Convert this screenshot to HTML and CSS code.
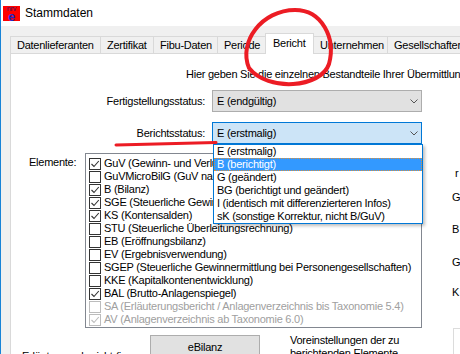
FILE: index.html
```html
<!DOCTYPE html>
<html>
<head>
  <title>Stammdaten</title>
  <meta charset="utf-8">
  <link rel="stylesheet" href="styles.css">
</head>
<body>
  <div class="window">
    <div class="titlebar">
      <span class="app-icon"><span class="nrv">nrv</span><span class="e">e</span></span>
      <span class="title">Stammdaten</span>
    </div>

    <div class="tabs">
      <div class="tab w-daten">Datenlieferanten</div>
      <div class="tab w-zert">Zertifikat</div>
      <div class="tab w-fibu">Fibu-Daten</div>
      <div class="tab w-periode">Periode</div>
      <div class="tab active w-bericht">Bericht</div>
      <div class="tab w-unter">Unternehmen</div>
      <div class="tab w-gesell">Gesellschafter</div>
    </div>

    <div class="panel">
      <p class="intro">Hier geben Sie die einzelnen Bestandteile Ihrer Übermittlung an.</p>

      <div class="field">
        <label class="field-label">Fertigstellungsstatus:</label>
        <div class="combo">
          <span>E (endgültig)</span>
          <svg class="chevron" width="8" height="5" viewBox="0 0 8 5"><polyline points="0.5,0.5 4,4 7.5,0.5" fill="none" stroke="#555" stroke-width="1"/></svg>
        </div>
      </div>

      <div class="field second">
        <label class="field-label">Berichtsstatus:</label>
        <div class="combo focus">
          <span>E (erstmalig)</span>
          <svg class="chevron" width="8" height="5" viewBox="0 0 8 5"><polyline points="0.5,0.5 4,4 7.5,0.5" fill="none" stroke="#555" stroke-width="1"/></svg>
          <ul class="dropdown">
            <li>E (erstmalig)</li>
            <li class="selected">B (berichtigt)</li>
            <li>G (geändert)</li>
            <li>BG (berichtigt und geändert)</li>
            <li>I (identisch mit differenzierteren Infos)</li>
            <li>sK (sonstige Korrektur, nicht B/GuV)</li>
          </ul>
        </div>
      </div>

      <div class="elements">
        <label class="el-label">Elemente:</label>
        <div class="checklist">
          <div class="item"><span class="box checked"></span>GuV (Gewinn- und Verlustrechnung)</div>
          <div class="item"><span class="box"></span>GuVMicroBilG (GuV nach MicroBilG)</div>
          <div class="item"><span class="box checked"></span>B (Bilanz)</div>
          <div class="item"><span class="box checked"></span>SGE (Steuerliche Gewinnermittlung)</div>
          <div class="item"><span class="box checked"></span>KS (Kontensalden)</div>
          <div class="item"><span class="box"></span>STU (Steuerliche Überleitungsrechnung)</div>
          <div class="item"><span class="box"></span>EB (Eröffnungsbilanz)</div>
          <div class="item"><span class="box"></span>EV (Ergebnisverwendung)</div>
          <div class="item"><span class="box"></span>SGEP (Steuerliche Gewinnermittlung bei Personengesellschaften)</div>
          <div class="item"><span class="box"></span>KKE (Kapitalkontenentwicklung)</div>
          <div class="item"><span class="box checked"></span>BAL (Brutto-Anlagenspiegel)</div>
          <div class="item disabled"><span class="box"></span>SA (Erläuterungsbericht / Anlagenverzeichnis bis Taxonomie 5.4)</div>
          <div class="item disabled"><span class="box checked"></span>AV (Anlagenverzeichnis ab Taxonomie 6.0)</div>
        </div>
        <div class="side">
          <span class="side-r">r</span>
          <span class="side-g1">G</span>
          <span class="side-b">B</span>
          <span class="side-g2">G</span>
          <span class="side-k">K</span>
          <div class="side-box"></div>
        </div>
      </div>

      <div class="bottom">
        <div class="expl">Erläuterungsbericht (i</div>
        <button class="btn">eBilanz</button>
        <div class="presets">Voreinstellungen der zu<br>berichtenden Elemente</div>
      </div>
    </div>
  </div>

  <!-- red marker drawn over the screenshot -->
  <svg class="annot" width="460" height="354" viewBox="0 0 460 354">
    <path d="M249 68 C238 42 262 10 295 10 C322 10 336 38 329 64 C321 88 268 92 249 68" fill="none" stroke="#ec1c24" stroke-width="4" stroke-linecap="round"/>
    <line x1="116" y1="145" x2="216" y2="142.5" stroke="#ec1c24" stroke-width="3" stroke-linecap="round"/>
  </svg>
</body>
</html>
```

FILE: styles.css
```css
body {
  margin: 0;
  width: 460px;
  height: 354px;
  overflow: hidden;
  position: relative;
  background: #f0f0f0;
  font-family: "Liberation Sans", Arial, sans-serif;
  font-size: 11px;
  color: #000;
}

.window {
  height: 354px;
  border-left: 1px solid #1883d7;
  letter-spacing: -0.25px;
}

/* title bar */
.titlebar {
  height: 26px;
  background: #fff;
  display: flex;
  align-items: center;
  padding-left: 2px;
  letter-spacing: 0;
}

.app-icon {
  width: 17px;
  height: 15px;
  background: #ff0000;
  display: flex;
  flex-direction: column;
  align-items: center;
}

.app-icon .nrv {
  font-size: 7px;
  line-height: 6px;
  color: #3a1a6a;
}

.app-icon .e {
  font-size: 13px;
  line-height: 9px;
  font-weight: bold;
  color: #1a2ad0;
}

.title {
  margin-left: 5px;
  font-size: 12px;
}

/* tabs */
.tabs {
  display: flex;
  align-items: flex-end;
  height: 27px;
  padding-left: 9px;
}

.tab {
  box-sizing: border-box;
  flex: none;
  height: 17px;
  line-height: 16px;
  padding-left: 6px;
  margin-right: -1px;
  border: 1px solid #d9d9d9;
  border-bottom: none;
  background: #f0f0f0;
  white-space: nowrap;
  overflow: hidden;
}

.tab.active {
  height: 21px;
  margin-bottom: -1px;
  padding: 1px 0 0 7px;
  background: #fff;
  position: relative;
  z-index: 1;
}

.w-daten { width: 91px; }
.w-zert { width: 54px; }
.w-fibu { width: 65px; }
.w-periode { width: 49px; }
.w-bericht { width: 49px; }
.w-unter { width: 75px; }
.w-gesell { width: 80px; }

/* tab page */
.panel {
  margin-left: 9px;
  height: 301px;
  background: #fff;
  border-left: 1px solid #d9d9d9;
  border-top: 1px solid #d9d9d9;
}

.intro {
  margin: 13px 0 0 175px;
  line-height: 14px;
  white-space: nowrap;
}

.field {
  display: flex;
  align-items: center;
  margin-top: 9px;
}

.field.second {
  margin-top: 10px;
}

.field-label {
  flex: none;
  width: 194px;
  margin-right: 7px;
  text-align: right;
}

.combo {
  position: relative;
  flex: none;
  box-sizing: border-box;
  width: 210px;
  height: 22px;
  padding-left: 4px;
  display: flex;
  align-items: center;
  border: 1px solid #adadad;
  background: #e1e1e1;
}

.combo.focus {
  border-color: #0078d7;
  background: #cce4f7;
}

.chevron {
  margin-left: auto;
  margin-right: 3px;
}

.dropdown {
  position: absolute;
  left: 0;
  top: 21px;
  z-index: 2;
  box-sizing: border-box;
  width: 210px;
  margin: 0;
  padding: 0;
  list-style: none;
  background: #fff;
  border: 1px solid #0078d7;
  box-shadow: 2px 2px 3px rgba(0, 0, 0, 0.25);
}

.dropdown li {
  height: 13px;
  line-height: 13px;
  padding-left: 3px;
  white-space: nowrap;
}

.dropdown li.selected {
  background: #3399ff;
  color: #fff;
  outline: 1px dotted #d8903c;
  outline-offset: -1px;
}

/* element list */
.elements {
  display: flex;
  align-items: flex-start;
  height: 175px;
  margin-top: 9px;
}

.el-label {
  box-sizing: border-box;
  flex: none;
  width: 74px;
  padding-left: 18px;
  margin-top: 2px;
  line-height: 14px;
}

.checklist {
  box-sizing: border-box;
  flex: none;
  width: 337px;
  height: 175px;
  padding: 3px 0 0 3px;
  border: 1px solid #828790;
  overflow: hidden;
}

.item {
  height: 13px;
  line-height: 13px;
  display: flex;
  align-items: center;
  gap: 3px;
  white-space: nowrap;
}

.box {
  box-sizing: border-box;
  flex: none;
  width: 12px;
  height: 12px;
  border: 1px solid #333;
  background: #fff center / 10px 10px no-repeat;
}

.box.checked {
  background-image: url("data:image/svg+xml,%3Csvg xmlns='http://www.w3.org/2000/svg' viewBox='0 0 10 10'%3E%3Cpolyline points='1.5,5 4,7.5 8.8,2' fill='none' stroke='%23333' stroke-width='1.1'/%3E%3C/svg%3E");
}

.item.disabled {
  color: #a0a0a0;
}

.item.disabled .box {
  border-color: #bcbcbc;
}

.item.disabled .box.checked {
  background-image: url("data:image/svg+xml,%3Csvg xmlns='http://www.w3.org/2000/svg' viewBox='0 0 10 10'%3E%3Cpolyline points='1.5,5 4,7.5 8.8,2' fill='none' stroke='%23bcbcbc' stroke-width='1.1'/%3E%3C/svg%3E");
}

.side {
  flex: none;
  display: flex;
  flex-direction: column;
  align-items: flex-start;
  margin-left: 30px;
  line-height: 14px;
}

.side-r { margin: 13px 0 0 3px; }
.side-g1 { margin-top: 10px; }
.side-b { margin-top: 18px; }
.side-g2 { margin-top: 19px; }
.side-k { margin-top: 16px; }

.side-box {
  width: 40px;
  height: 40px;
  margin: 29px 0 0 1px;
  background: #fff;
  border: 1px solid #dcdcdc;
}

/* bottom row */
.bottom {
  display: flex;
  align-items: flex-start;
  margin-top: 7px;
}

.expl {
  box-sizing: border-box;
  flex: none;
  width: 139px;
  padding-left: 11px;
  margin-top: 14px;
  line-height: 14px;
  white-space: nowrap;
}

.btn {
  flex: none;
  width: 110px;
  height: 23px;
  padding: 0;
  font: inherit;
  letter-spacing: inherit;
  color: #000;
  background: #e1e1e1;
  border: 1px solid #adadad;
}

.presets {
  flex: none;
  margin: -1px 0 0 30px;
  line-height: 13px;
  white-space: nowrap;
}

.annot {
  position: absolute;
  left: 0;
  top: 0;
  pointer-events: none;
}
```
